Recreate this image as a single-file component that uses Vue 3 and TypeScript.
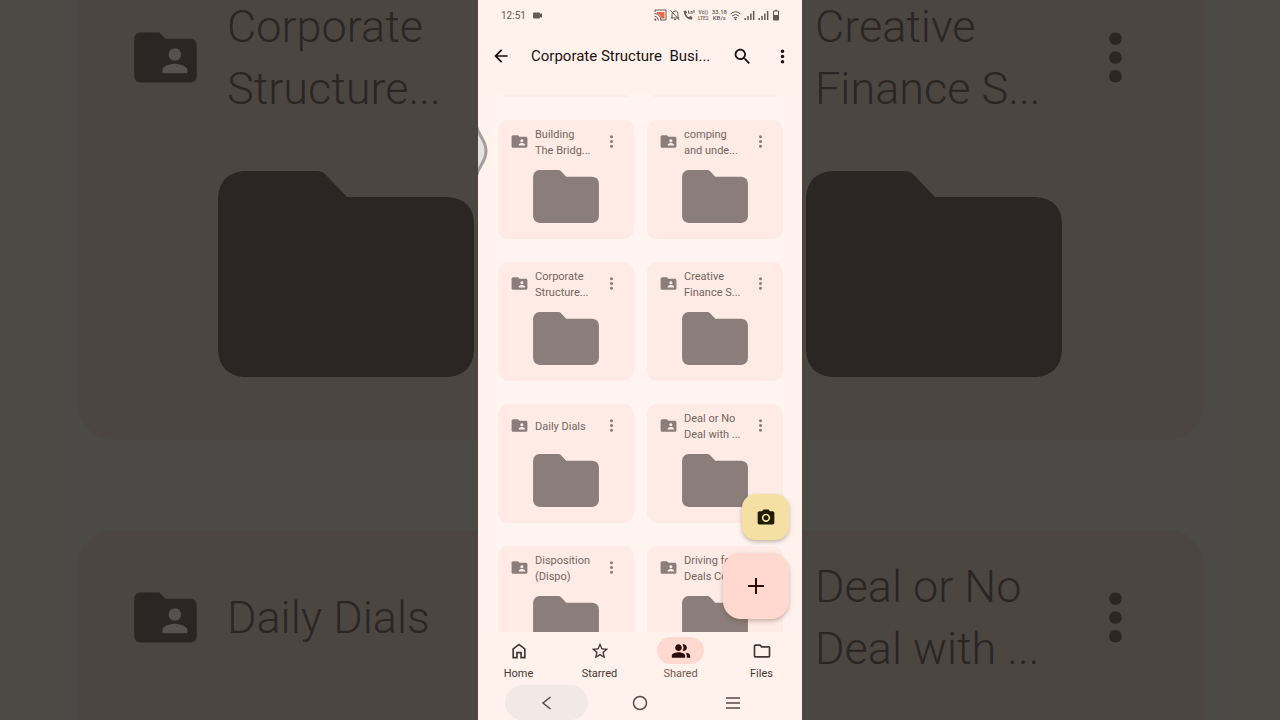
<script setup lang="ts">
import { ref } from 'vue'

interface Folder {
  name: string
}

const folders: Folder[] = [
  { name: 'Building\nThe Bridg...' },
  { name: 'comping\nand unde...' },
  { name: 'Corporate\nStructure...' },
  { name: 'Creative\nFinance S...' },
  { name: 'Daily Dials' },
  { name: 'Deal or No\nDeal with ...' },
  { name: 'Disposition\n(Dispo)' },
  { name: 'Driving for\nDeals Co...' },
]

const backdrop = [
  { side: 'left', cards: [folders[2], folders[4]] },
  { side: 'right', cards: [folders[3], folders[5]] },
]

const tabs = ['Home', 'Starred', 'Shared', 'Files']
const activeTab = ref('Shared')

const sharedIcon =
  'M20 6h-8l-2-2H4c-1.1 0-2 .9-2 2v12c0 1.1.9 2 2 2h16c1.1 0 2-.9 2-2V8c0-1.1-.9-2-2-2zm-5 3c1.1 0 2 .9 2 2s-.9 2-2 2-2-.9-2-2 .9-2 2-2zm4 8h-8v-1c0-1.33 2.67-2 4-2s4 .67 4 2v1z'
const dotsIcon =
  'M12 8c1.1 0 2-.9 2-2s-.9-2-2-2-2 .9-2 2 .9 2 2 2zm0 2c-1.1 0-2 .9-2 2s.9 2 2 2 2-.9 2-2-.9-2-2-2zm0 6c-1.1 0-2 .9-2 2s.9 2 2 2 2-.9 2-2-.9-2-2-2z'
const folderShape =
  'M26 0H99Q104 0 108 4L129 26H230Q256 28 256 54V180Q254 204 230 206H26Q2 204 0 180V26Q2 2 26 0Z'

const tabIcons: Record<string, string> = {
  Home: 'M12 3 4 9v12h6.5v-6h3v6H20V9l-8-6zm0 2.5 6 4.5v9h-2.5v-6h-7v6H6v-9l6-4.5z',
  Starred:
    'M22 9.24l-7.19-.62L12 2 9.19 8.63 2 9.24l5.46 4.73L5.82 21 12 17.27 18.18 21l-1.63-7.03L22 9.24zM12 15.4l-3.76 2.27 1-4.28-3.32-2.88 4.38-.38L12 6.1l1.71 4.04 4.38.38-3.32 2.88 1 4.28L12 15.4z',
  Shared:
    'M9 12c2.2 0 4-1.8 4-4s-1.8-4-4-4-4 1.800-4 4 1.800 4 4 4zm0 1.500c-2.700 0-8 1.300-8 4V20h16v-2.500c0-2.700-5.300-4-8-4zM15 12c2.200 0 4-1.800 4-4s-1.800-4-4-4c-.5 0-.9.1-1.300.2.800 1 1.300 2.400 1.300 3.800s-.5 2.800-1.300 3.800c.4.1.8.2 1.300.2zm2.500 1.900c1 .9 1.500 2.100 1.500 3.600V20h4v-2.500c0-1.900-2.700-3.100-5.500-3.600z',
  Files:
    'M9.170 6l2 2H20v10H4V6h5.170M10 4H4c-1.100 0-2 .9-2 2v12c0 1.100.9 2 2 2h16c1.100 0 2-.9 2-2V8c0-1.100-.9-2-2-2h-8l-2-2z',
}
</script>

<template>
  <div class="stage">
    <div
      v-for="panel in backdrop"
      :key="panel.side"
      class="backdrop"
      :class="panel.side"
      aria-hidden="true"
    >
      <div class="backdrop-list">
        <div v-for="card in panel.cards" :key="card.name" class="big-card">
          <div class="big-head">
            <svg v-if="panel.side === 'left'" class="big-icon" viewBox="0 0 24 24">
              <path class="person" d="M10 8h10v10H10z" />
              <path :d="sharedIcon" />
            </svg>
            <span class="big-name">{{ card.name }}</span>
            <svg v-if="panel.side === 'right'" class="big-icon" viewBox="0 0 24 24">
              <path :d="dotsIcon" />
            </svg>
          </div>
          <svg class="big-folder" viewBox="0 0 256 206"><path :d="folderShape" /></svg>
        </div>
      </div>
    </div>

    <main class="phone">
      <div class="status">
        <span class="time">12:51</span>
        <svg class="cam" viewBox="0 0 9 7"><path d="M1 .5h5q1 0 1 1v.5L9 1.200v4.600L7 5v.5q0 1-1 1H1q-1 0-1-1v-4q0-1 1-1z" /></svg>
        <span class="fill"></span>
        <svg class="w13" viewBox="0 0 13 12">
          <path d="M1 3V1h11v10H7" fill="none" stroke="#665a55" />
          <path d="M3 3h7.500v6.500H7.500Q6.500 5.500 3 4.500z" fill="#f4683c" />
          <path d="M.5 4.500q6 .5 6.500 7M.5 7q3.500.5 4 4.500" fill="none" stroke="#665a55" />
          <circle cx="1.300" cy="10.600" r="1.100" />
        </svg>
        <svg class="w10" viewBox="0 0 10 12">
          <path d="M2 9V5.500Q2 2.500 5 2t3 3.500V9M.8 9h8.400M4 10.500h2M.5 1.500l9 9.500" fill="none" stroke="#665a55" />
        </svg>
        <svg class="w12" viewBox="0 0 12 12">
          <path d="M.5 2 3 1.500l1 2.300-1.200 1.300q1 2.200 3 3.200L7.200 7 9.500 8 9 10.500Q2 11 .5 2z" />
          <path d="M5.500 1.500v3M7 5V3.500M7.500 2.500h1.500V5M11 1v3" fill="none" stroke="#665a55" />
        </svg>
        <span class="tiny volte"><span>Vo))</span><span>LTE2</span></span>
        <span class="tiny"><span>33.18</span><span>KB/s</span></span>
        <svg class="w11" viewBox="0 0 11 12">
          <path d="M.5 5Q5.500.5 10.500 5M2 7q3.500-3 7 0M3.700 9q1.800-1.500 3.600 0" fill="none" stroke="#665a55" />
          <circle cx="5.500" cy="10.300" r="1" />
        </svg>
        <svg v-for="n in 2" :key="n" class="w11" viewBox="0 0 11 12">
          <path d="M.5 9h1.500v2H.5zM3.300 7h1.500v4H3.300zM6.100 4.500h1.500V11H6.100zM8.900 2h1.500v9H8.900z" />
        </svg>
        <svg class="w8" viewBox="0 0 8 12">
          <path d="M3 .8h2v1H3z" />
          <path d="M1.500 2h5v9h-5z" fill="none" stroke="#665a55" />
          <path d="M1.500 6h5v5h-5z" />
        </svg>
      </div>

      <header class="appbar">
        <button class="plain" aria-label="Back">
          <svg class="s20" viewBox="0 0 24 24"><path d="M20 11H7.830l5.590-5.590L12 4l-8 8 8 8 1.410-1.410L7.830 13H20v-2z" /></svg>
        </button>
        <h1>Corporate Structure&nbsp; Busi...</h1>
        <button class="plain" aria-label="Search">
          <svg class="s21" viewBox="0 0 24 24"><path d="M15.500 14h-.79l-.28-.27C15.410 12.590 16 11.110 16 9.500 16 5.910 13.090 3 9.500 3S3 5.910 3 9.500 5.910 16 9.500 16c1.610 0 3.090-.59 4.230-1.570l.27.28v.79l5 4.990L20.490 19l-4.990-5zm-6 0C7.010 14 5 11.990 5 9.500S7.010 5 9.500 5 14 7.010 14 9.500 11.990 14 9.500 14z" /></svg>
        </button>
        <button class="plain" aria-label="More options">
          <svg class="s21" viewBox="0 0 24 24"><path :d="dotsIcon" /></svg>
        </button>
      </header>

      <section class="list">
        <div class="edge"></div>
        <div class="edge"></div>
        <article v-for="folder in folders" :key="folder.name" class="card">
          <div class="head">
            <svg class="s19" viewBox="0 0 24 24"><path :d="sharedIcon" /></svg>
            <span class="name">{{ folder.name }}</span>
            <button class="plain" :aria-label="'Options for ' + folder.name">
              <svg class="s19" viewBox="0 0 24 24"><path :d="dotsIcon" /></svg>
            </button>
          </div>
          <svg class="folder" viewBox="0 0 256 206"><path :d="folderShape" /></svg>
        </article>
      </section>

      <nav class="tabs">
        <button
          v-for="tab in tabs"
          :key="tab"
          class="tab"
          :class="{ active: tab === activeTab }"
          @click="activeTab = tab"
        >
          <span class="pill"><svg class="s20" viewBox="0 0 24 24"><path fill-rule="evenodd" :d="tabIcons[tab]" /></svg></span>
          <span>{{ tab }}</span>
        </button>
      </nav>

      <div class="system">
        <button class="pressed" aria-label="System back">
          <svg viewBox="0 0 16 16"><path d="M11.500 2 4 8l7.500 6" /></svg>
        </button>
        <button aria-label="System home">
          <svg viewBox="0 0 16 16"><circle cx="8" cy="8" r="6.500" /></svg>
        </button>
        <button aria-label="Recent apps">
          <svg viewBox="0 0 16 16"><path d="M1 3h14M1 8h14M1 13h14" /></svg>
        </button>
      </div>

      <svg class="swipe" viewBox="0 0 11 60">
        <path d="M-2 3C0 16 8 18 8 30S0 44-2 57z" />
      </svg>

      <div class="fabs">
        <button class="fab scan" aria-label="Scan">
          <svg class="s20" viewBox="0 0 24 24">
            <path fill-rule="evenodd" d="M9 3 7.200 5H4c-1.100 0-2 .9-2 2v12c0 1.100.9 2 2 2h16c1.100 0 2-.9 2-2V7c0-1.100-.9-2-2-2h-3.200L15 3H9zm3 5a5 5 0 1 1 0 10 5 5 0 0 1 0-10zm0 2a3 3 0 1 0 0 6 3 3 0 0 0 0-6z" />
          </svg>
        </button>
        <button class="fab add" aria-label="New">
          <svg class="s16" viewBox="0 0 16 16"><path d="M7 0h2v7h7v2H9v7H7V9H0V7h7z" /></svg>
        </button>
      </div>
    </main>
  </div>
</template>

<style>
body {
  margin: 0;
}
</style>

<style scoped>
.stage {
  display: grid;
  grid-template-columns: minmax(0, 1fr) 324px minmax(0, 1fr);
  height: 100vh;
  overflow: hidden;
  background: #4d4945;
  font-family: Roboto, 'Liberation Sans', sans-serif;
}
svg {
  display: block;
  flex: none;
  fill: currentColor;
}
button {
  font: inherit;
  color: inherit;
  border: 0;
  padding: 0;
  background: none;
  cursor: pointer;
}

/* Enlarged, dimmed folder grid behind the phone */
.backdrop {
  overflow: hidden;
  color: #2b2523;
}
.backdrop.left {
  order: 0;
  padding-left: 52px;
}
.backdrop.right {
  order: 2;
  padding-right: 44px;
}
.backdrop-list {
  display: flex;
  flex-direction: column;
  gap: 90px;
  background: #4b4a47;
}
.left .backdrop-list {
  padding-left: 26px;
}
.right .backdrop-list {
  padding-right: 32px;
}
.big-card {
  flex: none;
  box-sizing: border-box;
  height: 470px;
  padding-top: 25px;
  background: #4c4643;
}
.big-card:first-child {
  margin-top: -30px;
}
.left .big-card {
  border-radius: 36px 0 0 36px;
}
.right .big-card {
  border-radius: 0 36px 36px 0;
}
.big-head {
  display: flex;
  align-items: center;
  height: 124px;
  margin-bottom: 52px;
}
.left .big-head {
  gap: 24px;
  padding-left: 50px;
}
.right .big-head {
  justify-content: space-between;
  padding-left: 13px;
  padding-right: 51px;
}
.big-icon {
  width: 75px;
  height: 75px;
}
.person {
  fill: #57504e;
}
.big-name {
  padding-top: 2px;
  font-size: 45px;
  font-weight: 300;
  line-height: 62px;
  white-space: pre;
}
.big-folder {
  width: 256px;
  height: 206px;
}
.left .big-folder {
  margin-left: 140px;
}
.right .big-folder {
  margin-left: 4px;
}

/* Phone */
.phone {
  order: 1;
  position: relative;
  display: flex;
  flex-direction: column;
  min-height: 0;
  background: #fff2ec;
}
.status {
  display: flex;
  align-items: center;
  gap: 3px;
  height: 30px;
  padding: 0 22px 0 23px;
  color: #665a55;
}
.time {
  font-size: 10px;
}
.cam {
  width: 9px;
  height: 7px;
  margin-left: 4px;
}
.fill {
  flex: 1;
}
.w13 { width: 13px; height: 12px; }
.w12 { width: 12px; height: 12px; }
.w11 { width: 11px; height: 12px; }
.w10 { width: 10px; height: 12px; }
.w8 { width: 8px; height: 12px; }
.s16 { width: 16px; height: 16px; }
.s19 { width: 19px; height: 19px; }
.s20 { width: 20px; height: 20px; }
.s21 { width: 21px; height: 21px; }
.tiny {
  display: flex;
  flex-direction: column;
  align-items: center;
  font-size: 6px;
  line-height: 6px;
  font-weight: 500;
}
.volte {
  font-size: 5px;
}
.appbar {
  display: flex;
  align-items: center;
  height: 52px;
  margin-bottom: 13px;
  padding: 0 9px 0 13px;
  color: #1c1110;
}
.appbar h1 {
  flex: 1;
  margin: 0 0 0 20px;
  font-size: 15px;
  line-height: 24px;
  font-weight: 400;
  white-space: nowrap;
}
.appbar .plain + .plain {
  margin-left: 19px;
}
.list {
  flex: 1;
  min-height: 0;
  overflow: hidden;
  display: grid;
  grid-template-columns: 1fr 1fr;
  grid-template-rows: 2px;
  grid-auto-rows: 119px;
  gap: 23px 13px;
  margin: 0 14px;
  padding: 0 5px 0 6px;
  background: #fff4f0;
}
.edge {
  margin: 0 6px;
  background: #feeee8;
}
.card {
  display: flex;
  flex-direction: column;
  align-items: center;
  box-sizing: border-box;
  padding-top: 6px;
  border-radius: 10px;
  background: #feebe5;
  color: #8b7d79;
}
.head {
  display: flex;
  align-items: center;
  align-self: stretch;
  height: 31px;
  margin-bottom: 13px;
  padding: 0 13px 0 12px;
}
.name {
  flex: 1;
  padding: 3px 0 0 6px;
  font-size: 11px;
  line-height: 16px;
  color: #75655f;
  white-space: pre;
}
.folder {
  width: 66px;
  height: 53px;
}
.tabs {
  display: grid;
  grid-template-columns: repeat(4, 1fr);
  height: 53px;
}
.tab {
  display: flex;
  flex-direction: column;
  align-items: center;
  gap: 2px;
  padding-top: 5px;
  font-size: 11px;
  line-height: 16px;
  color: #453733;
}
.pill {
  display: flex;
  align-items: center;
  justify-content: center;
  width: 47px;
  height: 27px;
  border-radius: 14px;
}
.active {
  color: #75554d;
}
.active .pill {
  background: #ffd9d0;
  color: #2c0b08;
}
.system {
  display: grid;
  grid-template-columns: repeat(3, 1fr);
  height: 35px;
  padding: 0 22px;
}
.system button {
  display: flex;
  align-items: center;
  justify-content: center;
  margin: 0 5px;
  border-radius: 18px;
}
.system .pressed {
  background: #f3e9e4;
}
.system svg {
  width: 16px;
  height: 16px;
  fill: none;
  stroke: #554a47;
  stroke-width: 1.5;
}
.swipe {
  position: absolute;
  left: 0;
  top: 121px;
  width: 11px;
  height: 60px;
  fill: #e5e3df;
  stroke: #a19e9b;
  stroke-width: 3;
}
.fabs {
  position: absolute;
  right: 13px;
  bottom: 101px;
  display: flex;
  flex-direction: column;
  align-items: flex-end;
  gap: 13px;
}
.fab {
  display: flex;
  align-items: center;
  justify-content: center;
  box-shadow: 0 2px 4px rgba(90, 60, 50, 0.35);
}
.scan {
  width: 47px;
  height: 46px;
  border-radius: 14px;
  background: #f4e0a3;
  color: #211b00;
}
.add {
  width: 66px;
  height: 66px;
  border-radius: 18px;
  background: #ffd9d0;
  color: #2c0b08;
}
</style>
